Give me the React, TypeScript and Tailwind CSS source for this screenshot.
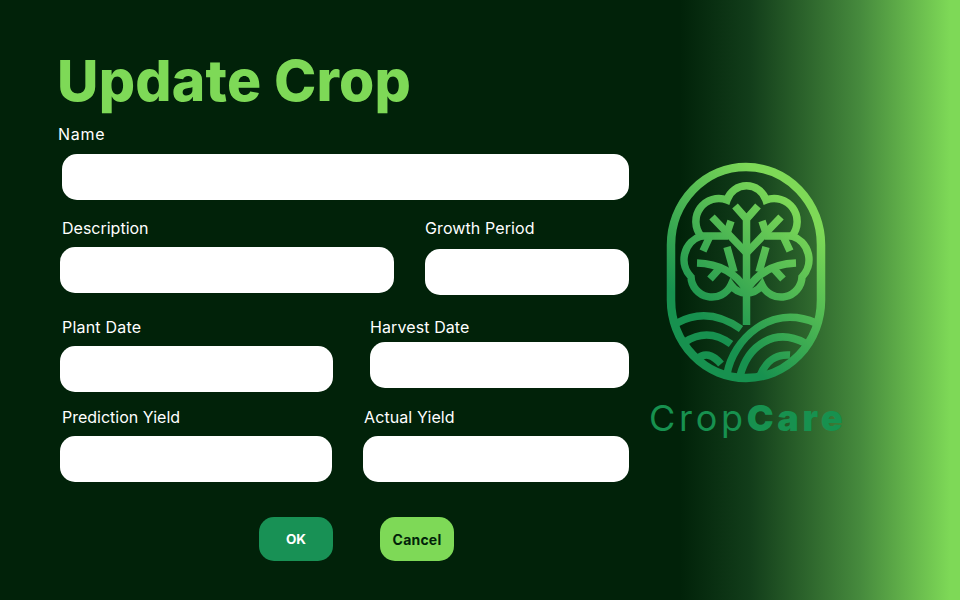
function Field({ label, labelClass = "", inputClass = "", className = "" }: { label: string; labelClass?: string; inputClass?: string; className?: string }) {
  return (
    <div className={className}>
      <div className={`text-[16px] leading-[20px] text-white font-['Inter',sans-serif] ${labelClass}`}>{label}</div>
      <div className={`h-[46px] bg-white rounded-[15px] ${inputClass}`} />
    </div>
  );
}

function Logo() {
  return (
    <svg viewBox="660 158 172 230" className="w-[172px] h-[230px]" fill="none">
      <defs>
        <linearGradient id="lg" gradientUnits="userSpaceOnUse" x1="656" y1="276" x2="756" y2="170">
          <stop offset="0" stopColor="#17914f" />
          <stop offset="1" stopColor="#7ed957" />
        </linearGradient>
      </defs>
      <g stroke="url(#lg)" strokeWidth="7.5">
        <path strokeWidth="8.5" d="M671 245 A75 78 0 0 1 821 245 V300 A75 78 0 0 1 671 300 Z" />
        <path d="M727 200 A20.5 20.5 0 0 1 766 200 A23 23 0 0 1 792 236 A25 25 0 0 1 802 277 A21 21 0 0 1 762 285 A19 19 0 0 1 731 285 A21 21 0 0 1 691 277 A25 25 0 0 1 701 236 A23 23 0 0 1 727 200 Z" />
        <path d="M700 236 H728 M793 236 H765" />
        <path d="M735 206 L746.5 219 L758 206 M746.5 219 V325" />
        <path d="M712 217 L746.5 253 M781 217 L746.5 253" />
        <path d="M731 221 L727 233 M762 221 L766 233 M703 251 L710 236 M790 251 L783 236" />
        <path d="M697 263 Q730 264 746.5 290 M796 263 Q763 264 746.5 290" />
        <path d="M727 247 L734 272 M766 247 L759 272 M710 279 L720 268 M783 279 L773 268" />
        <path d="M677 323 Q708 306 741 329" />
        <path d="M685 342 Q708 327 731 344" />
        <path d="M697 359 Q708 349 721 364" />
        <path d="M727 374 C733 340 770 303 816 323" />
        <path d="M740 376 C748 345 775 327 805 343" />
        <path d="M760 376 C766 361 775 354 790 355" />
      </g>
    </svg>
  );
}

export default function App() {
  return (
    <div className="w-[960px] h-[600px] overflow-hidden flex bg-[linear-gradient(90deg,#012209_70.8%,#123d1a_78.1%,#468a3d_89.6%,#7ed957_99%)] font-['Inter',sans-serif]">
      <div className="w-[660px] pl-[57px] pt-[46px] shrink-0">
        <h1 className="text-[57px] leading-[70px] font-extrabold text-[#7ed957] tracking-[0.2px]">Update Crop</h1>
        <Field label="Name" className="mt-[8px] w-[572px]" labelClass="ml-[1px] tracking-[0.7px]" inputClass="mt-[10px] ml-[5px] w-[567px]" />

        <div className="flex mt-[18px]">
          <Field label="Description" className="ml-[3px]" labelClass="ml-[2px]" inputClass="mt-[9px] w-[334px]" />
          <Field label="Growth Period" className="ml-[31px]" labelClass="tracking-[0.1px]" inputClass="mt-[11px] w-[204px]" />
        </div>

        <div className="flex mt-[22px]">
          <Field label="Plant Date" className="ml-[3px]" labelClass="ml-[2px] tracking-[0.2px]" inputClass="mt-[9px] w-[273px]" />
          <Field label="Harvest Date" className="ml-[37px]" labelClass="tracking-[0.1px]" inputClass="mt-[5px] w-[259px]" />
        </div>

        <div className="flex mt-[15px]">
          <Field label="Prediction Yield" className="ml-[3px]" labelClass="ml-[2px]" inputClass="mt-[9px] w-[272px]" />
          <Field label="Actual Yield" className="ml-[31px]" labelClass="ml-[1px] tracking-[0.1px]" inputClass="mt-[9px] w-[266px]" />
        </div>

        <div className="flex mt-[35px] ml-[202px] gap-[47px]">
          <button className="w-[74px] h-[44px] rounded-[15px] bg-[#189155] text-white text-[13.5px] font-bold">OK</button>
          <button className="w-[74px] h-[44px] rounded-[15px] bg-[#7ed957] text-[#012209] text-[14px] font-bold tracking-[0.2px]">Cancel</button>
        </div>
      </div>
      <div className="pt-[158px]">
        <Logo />
        <div className="-ml-[11px] mt-[8px] whitespace-nowrap text-[36px] leading-[44px] text-[#17914f] tracking-[3.7px]">
          Crop<span className="font-black">Care</span>
        </div>
      </div>
    </div>
  );
}
